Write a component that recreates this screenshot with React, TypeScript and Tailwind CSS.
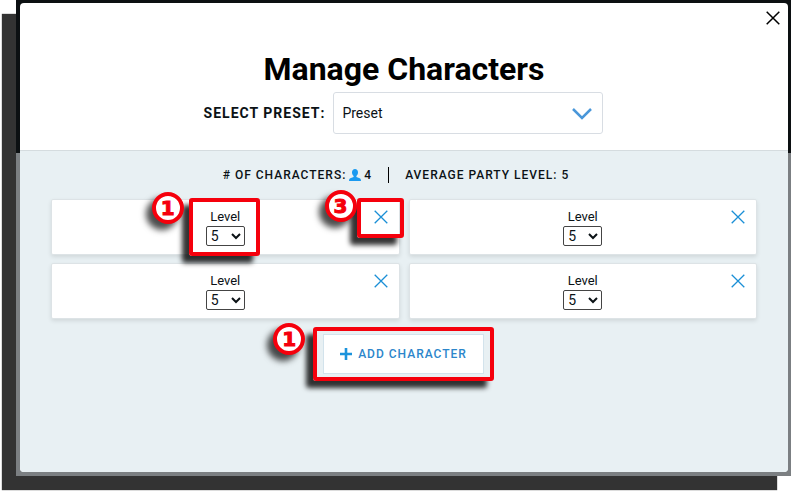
import { clsx } from "clsx";
import { useState } from "react";

const LEVELS = Array.from({ length: 20 }, (_, i) => i + 1);

function CrossIcon({ className }: { className?: string }) {
  return (
    <svg viewBox="0 0 14 14" className={className} aria-hidden="true">
      <path d="M.7.7l12.6 12.6M13.3.7L.7 13.3" fill="none" stroke="currentColor" />
    </svg>
  );
}

function PersonIcon() {
  return (
    <svg viewBox="0 0 12 12" className="size-3 text-[#1b9af0]" aria-hidden="true">
      <path
        d="M6 0C4.200 0 3 1.300 3 3.200c0 1.600.7 2.900 1.600 3.700v1.200C3 8.900.6 9.200.2 10.400L0 12h12l-.2-1.600C11.400 9.200 9 8.900 7.400 8.100V6.900C8.300 6.100 9 4.800 9 3.200 9 1.300 7.800 0 6 0z"
        fill="currentColor"
      />
    </svg>
  );
}

// Red numbered outline laid over the control it describes
function Callout({
  step,
  className,
  badgeClassName,
}: {
  step: number;
  className: string;
  badgeClassName: string;
}) {
  return (
    <span
      className={clsx(
        "pointer-events-none absolute z-10 rounded-[3px] border-4 border-[#f5000c] shadow-[-7px_7px_5px_rgba(0,0,0,0.8)]",
        className,
      )}
    >
      <span
        className={clsx(
          "absolute flex size-8 items-center justify-center rounded-full border-4 border-[#f5000c] bg-white font-['DejaVu_Sans',sans-serif] text-xl leading-none font-bold tracking-normal text-[#f5000c] shadow-[-6px_6px_6px_rgba(0,0,0,0.7)] [-webkit-text-stroke:1px_#f5000c]",
          badgeClassName,
        )}
      >
        {step}
      </span>
    </span>
  );
}

function CharacterCard({
  id,
  level,
  onLevelChange,
  onRemove,
  annotated,
}: {
  id: number;
  level: number;
  onLevelChange: (level: number) => void;
  onRemove: () => void;
  annotated: boolean;
}) {
  return (
    <li className="grid h-14 grid-cols-[1fr_auto_1fr] items-start rounded-xs border border-[#dde3e6] bg-white shadow-[0_2px_4px_rgba(0,0,0,0.1)]">
      <div className="relative col-start-2 flex flex-col items-center pt-2">
        <label htmlFor={`level-${id}`} className="text-[13px] leading-[18px]">
          Level
        </label>
        <select
          id={`level-${id}`}
          value={level}
          onChange={(e) => onLevelChange(Number(e.target.value))}
          className="h-5 w-[39px] rounded-xs border border-[#444] bg-white text-sm leading-4"
        >
          {LEVELS.map((n) => (
            <option key={n} value={n}>
              {n}
            </option>
          ))}
        </select>
        {annotated && (
          <Callout
            step={1}
            className="-top-0.5 -right-[15px] -bottom-2.5 -left-[17px]"
            badgeClassName="-top-2.5 -left-[41px]"
          />
        )}
      </div>
      <button
        type="button"
        aria-label="Remove character"
        onClick={onRemove}
        className="relative mt-2.5 mr-[11px] justify-self-end text-[#1a8fd6]"
      >
        <CrossIcon className="size-3.5 stroke-[1.3]" />
        {annotated && (
          <Callout
            step={3}
            className="-top-3 -right-4 -bottom-3.5 -left-[17px]"
            badgeClassName="-top-3 -left-9"
          />
        )}
      </button>
    </li>
  );
}

export default function App() {
  const [characters, setCharacters] = useState([
    { id: 1, level: 5 },
    { id: 2, level: 5 },
    { id: 3, level: 5 },
    { id: 4, level: 5 },
  ]);

  const average = characters.length
    ? Math.round(characters.reduce((sum, c) => sum + c.level, 0) / characters.length)
    : 0;

  function setLevel(id: number, level: number) {
    setCharacters((prev) => prev.map((c) => (c.id === id ? { ...c, level } : c)));
  }

  function addCharacter() {
    setCharacters((prev) => [...prev, { id: Date.now(), level: 5 }]);
  }

  return (
    <div className="overflow-hidden bg-white pb-4 pl-4 font-[Roboto,sans-serif] text-[#0b1216]">
      <div className="bg-[linear-gradient(#0c1012_153px,#7b7f82_153px)] pt-[3px] pr-[3px] pb-1 pl-1 shadow-[-14px_14px_1px_#333]">
        <div role="dialog" aria-labelledby="dialog-title" className="overflow-hidden rounded-sm bg-white">
          <header className="relative flex flex-col items-center border-b border-[#d5dcdf] pt-[46px] pb-4">
            <button type="button" aria-label="Close" className="absolute top-2 right-2 text-black">
              <CrossIcon className="size-3.5 stroke-[1.5]" />
            </button>
            <h1 id="dialog-title" className="text-[32px] leading-10 font-bold text-black">
              Manage Characters
            </h1>
            <div className="mt-[3px] mr-px flex items-center gap-2">
              <label htmlFor="preset" className="text-sm leading-4 font-bold tracking-[1px]">
                SELECT PRESET:
              </label>
              <div className="relative">
                <select
                  id="preset"
                  className="h-[42px] w-[270px] appearance-none rounded-[3px] border border-[#d8dde3] bg-white px-2 text-sm"
                >
                  <option>Preset</option>
                </select>
                <svg
                  viewBox="0 0 20 12"
                  className="pointer-events-none absolute top-4 right-[11px] h-3 w-5 text-[#4a97d9]"
                  aria-hidden="true"
                >
                  <path d="M1 1l9 9 9-9" fill="none" stroke="currentColor" strokeWidth="2.500" />
                </svg>
              </div>
            </div>
          </header>

          <main className="flex flex-col items-center bg-[#e8f0f3] px-[31px] pt-4 pb-[98px]">
            <div className="mr-4 flex items-center text-xs leading-4 font-medium tracking-[1px]">
              <span># OF CHARACTERS:</span>
              <span className="ml-[3px] flex items-center gap-[3px]">
                <PersonIcon />
                {characters.length}
              </span>
              <span className="mx-4 h-4 w-px bg-black" />
              <span>AVERAGE PARTY LEVEL: {average}</span>
            </div>

            <ul className="mt-4 grid w-full grid-cols-2 gap-x-[9px] gap-y-2">
              {characters.map((c, i) => (
                <CharacterCard
                  key={c.id}
                  id={c.id}
                  level={c.level}
                  onLevelChange={(level) => setLevel(c.id, level)}
                  onRemove={() => setCharacters((prev) => prev.filter((p) => p.id !== c.id))}
                  annotated={i === 0}
                />
              ))}
            </ul>

            <button
              type="button"
              onClick={addCharacter}
              className="relative mt-[15px] mr-px flex h-10 items-center gap-1.5 border border-[#d3e3ec] bg-white px-4 text-xs font-medium tracking-[1px] text-[#2c86cb]"
            >
              <svg viewBox="0 0 12 12" className="size-3 text-[#1b93dc]" aria-hidden="true">
                <path d="M6 0v12M0 6h12" stroke="currentColor" strokeWidth="2.600" />
              </svg>
              ADD CHARACTER
              <Callout
                step={1}
                className="-inset-x-[11px] -inset-y-2"
                badgeClassName="-top-2 -left-11"
              />
            </button>
          </main>
        </div>
      </div>
    </div>
  );
}
